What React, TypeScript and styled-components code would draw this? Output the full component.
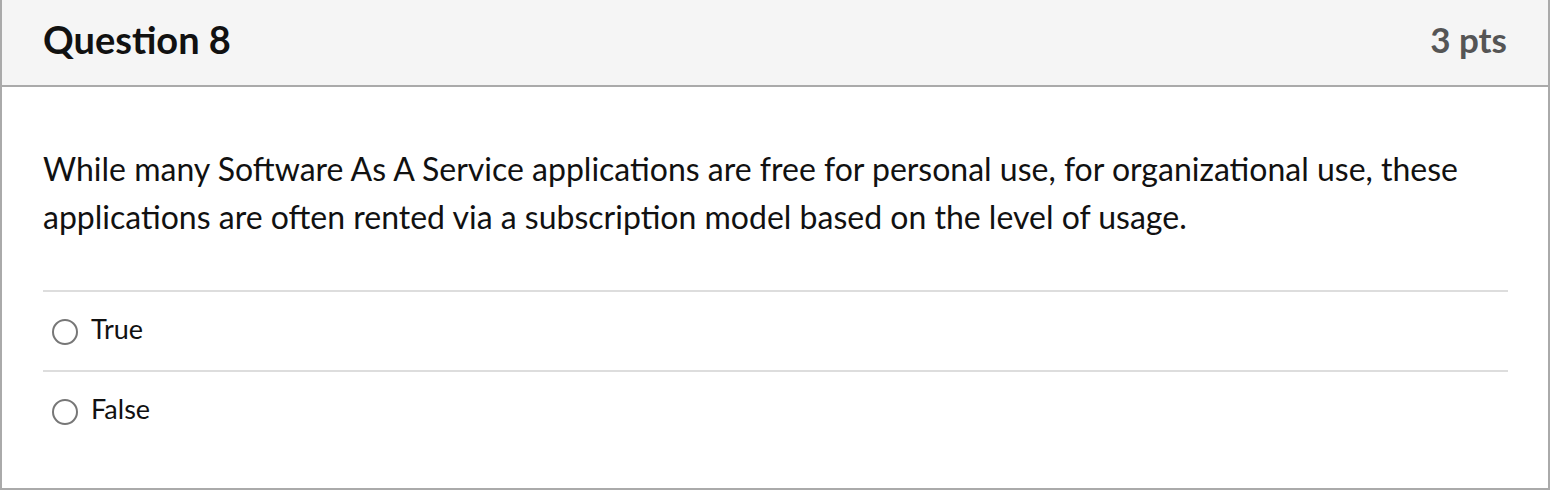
import React from 'react';
import styled, { createGlobalStyle } from 'styled-components';

const GlobalStyle = createGlobalStyle`
  html, body {
    margin: 0;
    padding: 0;
    background: #ffffff;
  }
  body {
    font-family: 'Lato', 'Open Sans', sans-serif;
    color: #000;
  }
`;

const Card = styled.div`
  width: 1550px;
  height: 490px;
  box-sizing: border-box;
  border: 2px solid #aaaaaa;
  border-top: none;
  display: flex;
  flex-direction: column;
`;

const Header = styled.div`
  height: 87px;
  box-sizing: border-box;
  background: #f5f5f5;
  border-bottom: 2px solid #aaaaaa;
  display: flex;
  align-items: center;
  justify-content: space-between;
  padding: 0 41px 8px 41px;
  flex-shrink: 0;
`;

const Title = styled.h2`
  margin: 0;
  font-family: 'Lato', sans-serif;
  font-weight: 700;
  font-size: 38px;
  color: #111;
`;

const Points = styled.span`
  font-family: 'Lato', sans-serif;
  font-weight: 700;
  font-size: 35px;
  color: #555555;
`;

const Body = styled.div`
  padding: 58px 40px 0 41px;
`;

const Question = styled.p`
  margin: 0 0 49px 0;
  font-family: 'Lato', sans-serif;
  font-size: 32px;
  line-height: 48px;
  color: #111;
`;

const Answers = styled.div`
  display: flex;
  flex-direction: column;
`;

const Answer = styled.label`
  display: flex;
  align-items: center;
  gap: 13px;
  height: 80px;
  box-sizing: border-box;
  border-top: 2px solid #dddddd;
  padding-left: 9px;
  font-family: 'Lato', sans-serif;
  font-size: 27px;
  color: #111;
`;

const Radio = styled.span`
  width: 22px;
  height: 22px;
  border: 2px solid #777777;
  border-radius: 50%;
  flex-shrink: 0;
  margin-top: 2px;
`;

const AnswerText = styled.span`
  padding-bottom: 5px;
`;

const answers = ['True', 'False'];

export default function App() {
  return (
    <>
      <GlobalStyle />
      <Card>
        <Header>
          <Title>Question 8</Title>
          <Points>3 pts</Points>
        </Header>
        <Body>
          <Question>
            While many Software As A Service applications are free for personal use, for organizational use, these
            applications are often rented via a subscription model based on the level of usage.
          </Question>
          <Answers>
            {answers.map((a) => (
              <Answer key={a}>
                <Radio />
                <AnswerText>{a}</AnswerText>
              </Answer>
            ))}
          </Answers>
        </Body>
      </Card>
    </>
  );
}
